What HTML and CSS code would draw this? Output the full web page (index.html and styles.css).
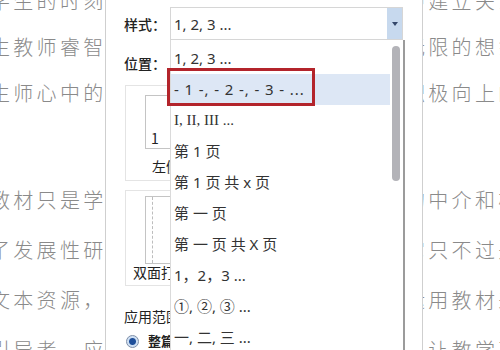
FILE: index.html
```html
<!DOCTYPE html>
<html lang="zh-CN">
<head>
    <meta charset="UTF-8">
    <title>页码格式</title>
    <link rel="stylesheet" href="styles.css">
</head>
<body>

    <div class="doc">
        <div class="para">
            <div class="line"><span class="l">学生的时刻，激发学生的</span><span class="r">中建立关系</span></div>
            <div class="line"><span class="l">生教师睿智的引导给学生</span><span class="r">无限的想象</span></div>
            <div class="line"><span class="l">生师心中的阳光让学生积</span><span class="r">积极向上的</span></div>
        </div>
        <div class="para">
            <div class="line"><span class="l">教材只是学生学习的一个</span><span class="r">的中介和桥</span></div>
            <div class="line"><span class="l">了发展性研究的材料，它</span><span class="r">它只不过是</span></div>
            <div class="line"><span class="l">文本资源，教师要善于运</span><span class="r">运用教材来</span></div>
            <div class="line"><span class="l">引导者，应该在教学中让</span><span class="r">，让教学更</span></div>
        </div>
    </div>

    <div class="dialog">
        <div class="field">
            <span class="label">样式：</span>
            <div class="select">
                <span class="value">1, 2, 3 ...</span>
                <span class="arrow"></span>
            </div>
        </div>

        <div class="field pos">
            <span class="label">位置：</span>
        </div>

        <div class="panel">
            <div class="page"><span>1</span></div>
            <div class="cap">左侧</div>
        </div>

        <div class="panel double">
            <div class="page"><span class="fold"></span></div>
            <div class="cap">双面打印</div>
        </div>

        <div class="scope">应用范围：</div>
        <div class="radio"><span class="dot"></span>整篇文档</div>

        <ul class="dropdown">
            <li>1, 2, 3 ...</li>
            <li class="hl">- 1 -, - 2 -, - 3 - ...</li>
            <li class="roman">I, II, III ...</li>
            <li>第 1 页</li>
            <li>第 1 页 共 x 页</li>
            <li>第 一 页</li>
            <li>第 一 页 共 X 页</li>
            <li>1，2，3 ...</li>
            <li>①, ②, ③ ...</li>
            <li>一, 二, 三 ...</li>
            <span class="thumb"></span>
        </ul>
    </div>

</body>
</html>
```

FILE: styles.css
```css
body {
    margin: 0;
    width: 500px;
    height: 350px;
    overflow: hidden;
    position: relative;
    background: #fff;
    font-family: "Noto Sans CJK SC", sans-serif;
}

/* document behind the dialog */
.doc {
    margin-top: -22px;
    font-size: 20px;
    font-weight: 300;
    color: #8a8a8a;
    letter-spacing: 3.3px;
}

.para {
    line-height: 46px;
}

.para + .para {
    margin-top: 59px;
    line-height: 50px;
}

.line {
    display: flex;
    white-space: nowrap;
}

.line .l {
    flex: none;
    width: 415px;
    margin-left: -10px;
    overflow: hidden;
}

.line .r {
    flex: none;
}

/* page number dialog */
.dialog {
    position: absolute;
    top: 0;
    left: 105px;
    width: 318px;
    height: 350px;
    box-sizing: border-box;
    background: #fff;
    border-left: 1px solid #cfcfcf;
    border-right: 1px solid #cfcfcf;
    padding: 7px 0 0 18px;
    font-size: 14px;
    color: #222;
}

.field {
    display: flex;
    align-items: center;
    height: 33px;
}

.field.pos {
    height: 20px;
    margin-top: 13px;
}

.label {
    width: 46px;
    flex: none;
    font-weight: 500;
}

.select {
    width: 233px;
    height: 33px;
    box-sizing: border-box;
    border: 1px solid #d6d6d6;
    display: flex;
    align-items: center;
    justify-content: space-between;
    padding-left: 3px;
    font-family: "Noto Sans", "Noto Sans CJK SC", sans-serif;
    font-size: 15px;
    color: #333;
}

.arrow {
    width: 15px;
    align-self: stretch;
    background: #c7d9ee;
    display: flex;
    align-items: center;
    justify-content: center;
}

.arrow::after {
    content: "";
    border-top: 4px solid #34476a;
    border-left: 3px solid transparent;
    border-right: 3px solid transparent;
}

.panel {
    width: 160px;
    margin: 12px 0 0 1px;
    border: 1px solid #e4e4e4;
    padding: 9px 0 4px;
}

.page {
    width: 70px;
    height: 54px;
    margin-left: 19px;
    box-sizing: border-box;
    border: 1px solid #c4c4c4;
    display: flex;
    align-items: flex-end;
    padding: 0 0 2px 5px;
    line-height: 16px;
}

.cap {
    margin-top: 7px;
    padding-left: 26px;
    line-height: 20px;
}

.panel.double {
    margin-top: 9px;
    padding: 5px 0 5px;
}

.double .page {
    height: 68px;
    padding: 0;
    align-items: stretch;
}

.fold {
    margin-left: 6px;
    border-left: 1px dashed #bdbdbd;
}

.double .cap {
    margin-top: 0;
    padding-left: 7px;
    line-height: 16px;
}

.scope {
    margin-top: 20px;
    line-height: 20px;
}

.radio {
    margin-top: 5px;
    line-height: 20px;
    display: flex;
    align-items: center;
    gap: 9px;
    font-weight: bold;
    font-size: 13px;
}

.dot {
    width: 11px;
    height: 11px;
    margin-left: 2px;
    border-radius: 50%;
    border: 1px solid #7f8fa8;
    background: radial-gradient(circle, #1f4f9a 0 3px, #cfe0f4 4px);
}

/* open list of the select */
.dropdown {
    position: absolute;
    top: 40px;
    left: 64px;
    width: 235px;
    bottom: -20px;
    box-sizing: border-box;
    margin: 0;
    padding: 3px 0 0;
    list-style: none;
    background: #fff;
    border-left: 1px solid #dadada;
    border-right: 2px solid #9b9b9b;
    font-family: "Noto Sans", "Noto Sans CJK SC", sans-serif;
    font-size: 15px;
    color: #333;
}

.dropdown li {
    height: 31px;
    line-height: 31px;
    padding-left: 3px;
    white-space: nowrap;
}

.dropdown .roman {
    font-family: "Liberation Serif", serif;
}

.dropdown .hl {
    position: relative;
    margin-right: 13px;
    background: #dde7f5;
    letter-spacing: 0.9px;
}

.dropdown .hl::after {
    content: "";
    position: absolute;
    left: -4px;
    top: -6px;
    width: 148px;
    height: 38px;
    box-sizing: border-box;
    border: 3px solid #b3242b;
}

.thumb {
    position: absolute;
    top: 6px;
    right: 3px;
    width: 8px;
    height: 135px;
    border-radius: 4px;
    background: #b3b3b8;
}
```
